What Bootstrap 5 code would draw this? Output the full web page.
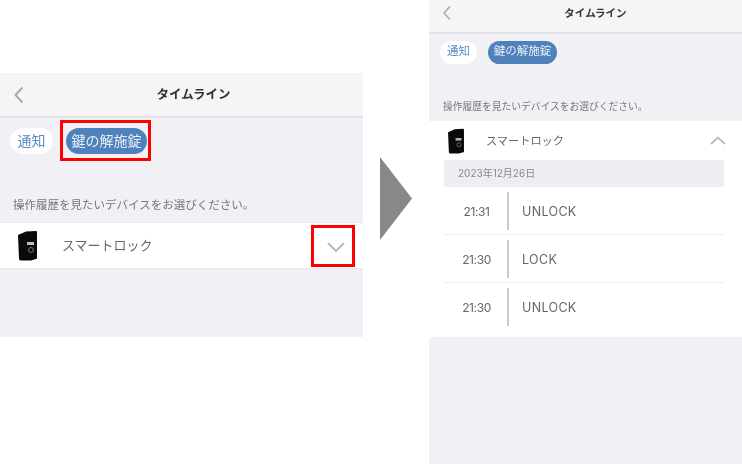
<!DOCTYPE html>
<html lang="ja">
<head>
    <meta charset="UTF-8">
    <meta name="viewport" content="width=device-width, initial-scale=1.0">
    <title>タイムライン</title>
    <link href="https://cdn.jsdelivr.net/npm/bootstrap@5.3.0/dist/css/bootstrap.min.css" rel="stylesheet">
    <style>
        html, body { height: 100%; }
        body { margin: 0; background: #fff; overflow: hidden; font-family: Inter, "Noto Sans CJK JP", sans-serif; color: #555; }
        .page-wrap { width: 742px; height: 464px; }
        .phone { background: #f0f0f5; filter: blur(.6px); }
        .phone-left { width: 363px; height: 264px; margin-top: 73px; }
        .phone-right { width: 313px; height: 464px; }
        .gap-arrow { width: 66px; padding-left: 17px; padding-top: 157px; }

        .top-bar { background: #f5f5f7; border-bottom: 2px solid #e4e4e8; color: #333; font-weight: 700; }
        .phone-left .top-bar { height: 45px; font-size: 12.5px; padding-left: 24px; padding-top: 2px; }
        .phone-right .top-bar { height: 34px; font-size: 10.5px; padding-left: 20px; padding-bottom: 4px; }
        .back-btn { position: absolute; top: 50%; transform: translateY(-50%); left: 14px; }
        .phone-right .back-btn { top: 41%; }

        .chip { border-radius: 20px; background: #fff; color: #5b8cc4; line-height: 1; }
        .chip-on { background: #4f81bd; color: #e8eef6; }
        .phone-left .chips { padding: 10px 0 0 10px; gap: 13px; }
        .phone-left .chip { height: 26px; font-size: 14px; padding: 6px 7.5px; }
        .phone-left .chip-on { padding: 6px 5.5px; }
        .phone-right .chips { padding: 7px 0 0 11px; gap: 11px; }
        .phone-right .chip { height: 23px; font-size: 11.5px; padding: 5px 7px; }
        .phone-right .chip-on { padding: 5px 5.7px; }

        .hint { color: #777; }
        .phone-left .hint { font-size: 11.5px; padding: 43px 0 0 13px; height: 68px; line-height: 17px; }
        .phone-right .hint { font-size: 9.75px; padding: 35px 0 0 14px; height: 57px; line-height: 15px; }

        .device-row { background: #fff; }
        .phone-left .device-row { height: 47px; border-top: 1px solid #e8e8ec; border-bottom: 1px solid #e8e8ec; padding: 0 18px 0 17px; font-size: 13px; }
        .phone-right .device-row { height: 39px; padding: 0 16px 0 18px; font-size: 11.2px; }
        .device-name { color: #666; }
        .phone-left .device-name { margin-left: 24px; }
        .phone-right .device-name { margin-left: 21px; padding-top: 2px; }
        .chev-down { margin-top: 2px; }

        .history { background: #fff; padding: 0 18px 6px 15px; }
        .date-bar { height: 27px; background: #eeeef2; color: #888; font-size: 10px; padding-left: 14px; }
        .log-row { height: 48px; border-bottom: 1px solid #eeeef0; font-size: 12px; color: #666; }
        .log-row:last-child { border-bottom: 0; }
        .log-time { width: 65px; padding-left: 2px; text-align: center; border-right: 2px solid #ccc; height: 38px; line-height: 40px; letter-spacing: -.4px; margin-right: 13px; }
        .log-text { font-size: 12.5px; letter-spacing: .35px; padding-top: 3px; }

        .mark-box { position: absolute; border: 3px solid #f00; }
        .mark-chip { left: 60px; top: 47px; width: 91px; height: 41px; }
        .mark-arrow { left: 311px; top: 152px; width: 44px; height: 42px; }
    </style>
</head>
<body>
    <div class="page-wrap d-flex align-items-start">
        <!-- before -->
        <div class="phone-left position-relative">
            <div class="phone h-100">
                <div class="top-bar position-relative d-flex align-items-center justify-content-center">
                    <svg class="back-btn" width="10" height="18" viewBox="0 0 10 18"><path d="M8.500 1.500 1.500 9l7 7.500" fill="none" stroke="#aaa" stroke-width="2"/></svg>
                    タイムライン
                </div>
                <div class="chips d-flex">
                    <span class="chip">通知</span>
                    <span class="chip chip-on">鍵の解施錠</span>
                </div>
                <div class="hint">操作履歴を見たいデバイスをお選びください。</div>
                <div class="device-row d-flex align-items-center">
                    <svg width="21" height="31" viewBox="0 0 21 31"><path d="M1 5 9 1.500 19 1q1 0 1 1v26q0 1-1 1l-5 1.500H4q-2 0-2-2z" fill="#0a0a0a"/><rect x="10" y="12" width="7" height="3" fill="#bbb"/><circle cx="14" cy="20" r="2.500" fill="none" stroke="#777"/></svg>
                    <span class="device-name">スマートロック</span>
                    <svg class="ms-auto chev-down" width="18" height="10" viewBox="0 0 18 10"><path d="M1 1 9 9l8-8" fill="none" stroke="#bbb" stroke-width="2"/></svg>
                </div>
            </div>
            <div class="mark-box mark-chip"></div>
            <div class="mark-box mark-arrow"></div>
        </div>

        <div class="gap-arrow">
            <svg width="32" height="83" viewBox="0 0 32 83" class="d-block"><path d="M0 0 32 41.500 0 83z" fill="#888"/></svg>
        </div>

        <!-- after -->
        <div class="phone phone-right">
            <div class="top-bar position-relative d-flex align-items-center justify-content-center">
                <svg class="back-btn" width="8" height="15" viewBox="0 0 8 15"><path d="M7 1 1 7.500 7 14" fill="none" stroke="#aaa" stroke-width="1.600"/></svg>
                タイムライン
            </div>
            <div class="chips d-flex">
                <span class="chip">通知</span>
                <span class="chip chip-on">鍵の解施錠</span>
            </div>
            <div class="hint">操作履歴を見たいデバイスをお選びください。</div>
            <div class="device-row d-flex align-items-center">
                <svg width="18" height="26" viewBox="0 0 21 31"><path d="M1 5 9 1.500 19 1q1 0 1 1v26q0 1-1 1l-5 1.500H4q-2 0-2-2z" fill="#0a0a0a"/><rect x="10" y="12" width="7" height="3" fill="#bbb"/><circle cx="14" cy="20" r="2.500" fill="none" stroke="#777"/></svg>
                <span class="device-name">スマートロック</span>
                <svg class="ms-auto" width="16" height="9" viewBox="0 0 16 9"><path d="M1 8 8 1.500 15 8" fill="none" stroke="#bbb" stroke-width="1.800"/></svg>
            </div>
            <div class="history">
                <div class="date-bar d-flex align-items-center">2023年12月26日</div>
                <div class="log-row d-flex align-items-center"><span class="log-time">21:31</span><span class="log-text">UNLOCK</span></div>
                <div class="log-row d-flex align-items-center"><span class="log-time">21:30</span><span class="log-text">LOCK</span></div>
                <div class="log-row d-flex align-items-center"><span class="log-time">21:30</span><span class="log-text">UNLOCK</span></div>
            </div>
        </div>
    </div>
    <script src="https://cdn.jsdelivr.net/npm/bootstrap@5.3.0/dist/js/bootstrap.bundle.min.js"></script>
</body>
</html>
